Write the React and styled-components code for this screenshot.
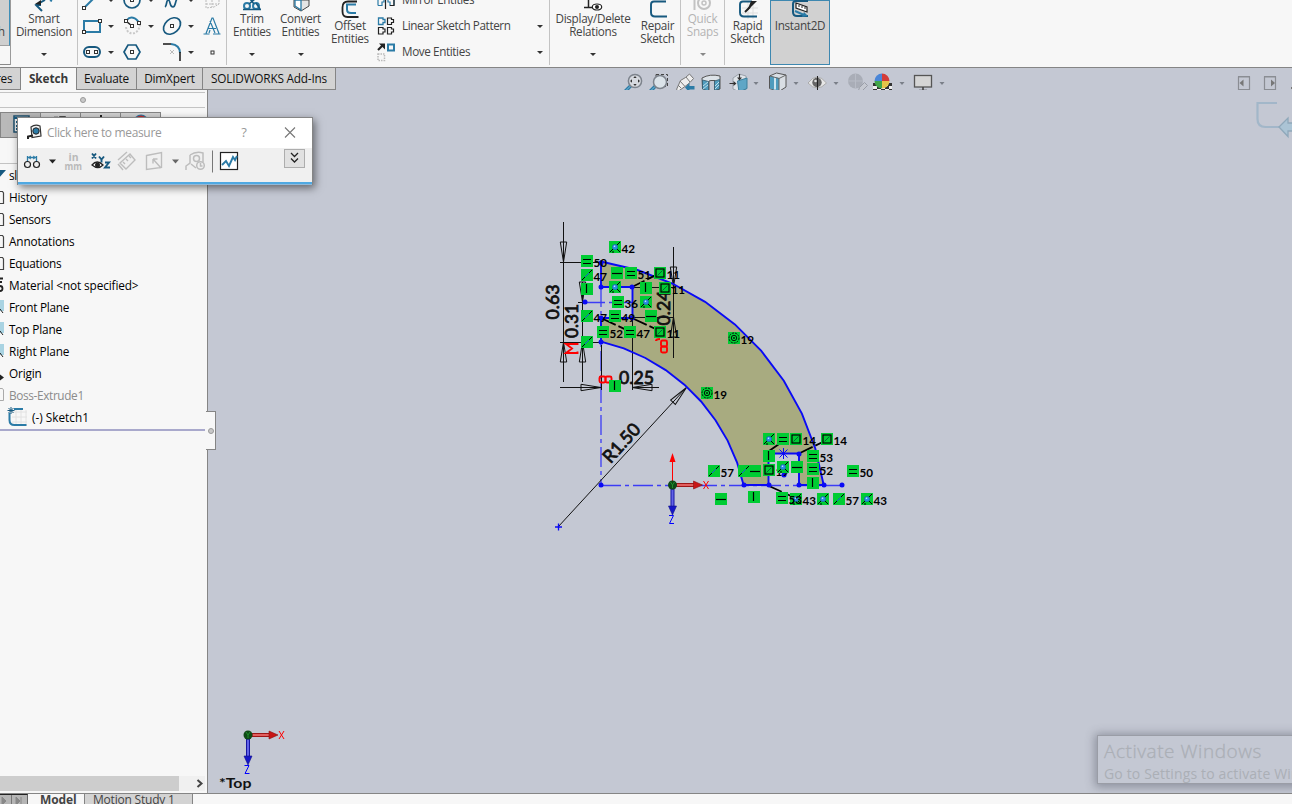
import React from "react";
import styled, { createGlobalStyle } from "styled-components";

const Global = createGlobalStyle`
  * { box-sizing: border-box; }
  body { margin: 0; overflow: hidden; font-family: "Open Sans", "Noto Sans", sans-serif; font-size: 12px; color: #000; }
  svg { display: block; flex: none; overflow: visible; }
`;

const NAVY = "#17597f";
const TEAL = "#2b7ba6";
const INK = "#333";

const Window = styled.div`
  width: 1292px; height: 804px; overflow: hidden; display: flex; flex-direction: column;
  background: #f7f7f7; position: relative;
`;

/* ---------- ribbon ---------- */
const Ribbon = styled.div`
  height: 68px; flex: none; display: flex; border-bottom: 1px solid #858585; background: #f7f7f7; overflow: hidden;
`;
const Group = styled.div`
  display: flex; height: 65px; width: ${p => p.$w}px; flex: none; border-right: 1px solid #c3c3c3;
`;
const CutButton = styled.div`
  width: 11px; height: 65px; display: flex; flex-direction: column; border-right: 1px solid #9a9a9a;
`;
const CutTop = styled.div`
  height: 46px; background: #cfcfcf; border-right: 1px solid #3f8fb8; border-bottom: 1px solid #a0a0a0;
  padding-top: 25px; line-height: 14px; padding-right: 4px; color: #444; direction: rtl; overflow: hidden;
`;
const CutBottom = styled.div`
  flex: 1; border-bottom: 1px solid #8a8a8a;
`;
const BigButton = styled.div`
  width: ${p => p.$w}px; margin-left: ${p => p.$ml || 0}px; height: 65px; flex: none; display: flex; flex-direction: column; align-items: center;
  color: ${p => (p.$off ? "#b4b4b4" : "#444")};
  ${p => p.$on && "background:#d1d1d1; box-shadow: inset 0 0 0 1px #3e88b0;"}
`;
const BigLabel = styled.div`
  text-align: center; line-height: 13px; white-space: pre; letter-spacing: -0.28px; font-size: 11.7px;
  flex: 1;
`;
const Caret = styled.i`
  width: 0; height: 0; border: 3px solid transparent; border-top-color: ${p => p.$c || "#333"}; border-bottom: 0; flex: none;
  margin-bottom: ${p => p.$mb || 0}px;
`;
const ToolGrid = styled.div`
  display: grid; grid-template-columns: 40px 40px 40px 26px; grid-auto-rows: 26px; margin-top: -13px; height: 78px; margin-left: 2px;
`;
const ToolCell = styled.div`
  display: flex; align-items: center; gap: 3px;
`;
const List = styled.div`
  display: flex; flex-direction: column; margin-top: -13px; width: 166px; margin-left: 2px;
`;
const ListRow = styled.div`
  height: 26px; display: flex; align-items: center; color: #444; font-size: 11.7px; letter-spacing: -0.38px;
`;
const ListText = styled.span`
  margin-left: 6px; flex: 1; white-space: nowrap; padding-bottom: 2px;
`;

/* ---------- tab strip and view tools ---------- */
const Header = styled.div`
  height: 22px; flex: none; display: flex; background: #c4c8d3;
`;
const Tab = styled.div`
  width: ${p => p.$w}px; height: 22px; flex: none; line-height: 21px; text-align: ${p => (p.$cut ? "left" : "center")}; white-space: nowrap; overflow: hidden;
  text-indent: ${p => (p.$cut ? -4 : 0)}px;
  background: ${p => (p.$on ? "#f7f7f7" : "#d3d3d3")}; color: ${p => (p.$on ? "#3a3a3a" : "#111")};
  font-weight: ${p => (p.$on ? 700 : 400)}; letter-spacing: ${p => p.$ls ?? -0.2}px; font-size: 11.8px;
  border-right: 1px solid #858585; border-bottom: ${p => (p.$on ? "0" : "1px solid #858585")};
`;
const ViewTools = styled.div`
  display: flex; margin-left: 284px; flex: 1;
`;
const PaneButtons = styled.div`
  display: flex; margin-left: auto; margin-right: 0;
`;

const Body = styled.div`
  height: 703px; flex: none; display: flex; background: #c4c8d3;
`;
const Panel = styled.div`
  width: 208px; flex: none; background: #f7f7f7; border-right: 1px solid #858585; display: flex; flex-direction: column; position: relative;
`;
const Splitter = styled.div`
  height: 16px; width: 205px; margin-top: 2px; border-top: 1px solid #c3c3c3; border-bottom: 1px solid #c3c3c3; flex: none;
  display: flex; align-items: center; justify-content: center; padding-right: 39px;
`;
const Dot = styled.i`
  width: 6px; height: 6px; border-radius: 50%; background: #c9c9c9; border: 1px solid #999; flex: none;
`;
const PanelTabs = styled.div`
  height: 26px; margin-top: 4px; display: flex; flex: none;
`;
const PanelTab = styled.div`
  width: ${p => (p.$on ? 41 : 40)}px; background: ${p => (p.$on ? "#b9b9b9" : "#d0d0d0")}; border: 1px solid #858585; border-left-width: ${p => (p.$on ? 1 : 0)}px;
  display: flex; justify-content: center; padding-top: 2px;
`;
const Tree = styled.div`
  margin-top: 25px; width: 205px; border-top: 1px solid #c3c3c3; border-bottom: 2px solid #a9a9cc; flex: none; height: 268px;
`;
const TreeRow = styled.div`
  height: 22px; display: flex; align-items: center; white-space: nowrap; color: ${p => (p.$off ? "#8b8b8b" : "#000")};
  letter-spacing: ${p => p.$ls ?? -0.27}px; font-size: 11.8px;
`;
const Flyout = styled.div`
  position: absolute; left: 206px; top: 321px; width: 10px; height: 39px; background: #f7f7f7; border: 1px solid #858585; border-left: 0;
  display: flex; align-items: center; justify-content: center;
`;
const Scroll = styled.div`
  margin-top: auto; margin-bottom: 2px; height: 15px; width: 205px; background: #f0f0f0; display: flex; align-items: center; flex: none;
`;
const Thumb = styled.div`
  width: 179px; height: 15px; background: #cdcdcd;
`;
const Canvas = styled.div`
  flex: 1; position: relative; overflow: hidden;
`;
const Toast = styled.div`
  position: absolute; left: 889px; top: 645px; width: 220px; height: 49px; border: 1px solid #9a9da6; padding: 2px 6px; color: #abafb6;
  box-shadow: 0 1px 9px 2px rgba(70, 75, 90, 0.45); background: #c4c8d3; white-space: nowrap;
`;
const ToastTitle = styled.div`
  font-size: 19px; line-height: 26px; letter-spacing: 0.55px; font-weight: 300; -webkit-text-stroke: 0.3px #abafb6;
`;
const ToastText = styled.div`
  font-size: 14px; line-height: 20px; letter-spacing: 0.15px;
`;

/* ---------- floating measure window ---------- */
const Dialog = styled.div`
  position: absolute; left: 17px; top: 117px; width: 296px; height: 68px; border: 1px solid #858585; border-bottom: 0; background: #f0f0f0;
  box-shadow: 2px 3px 8px rgba(0, 0, 0, 0.5); display: flex; flex-direction: column;
`;
const DialogTitle = styled.div`
  height: 30px; background: #fff; display: flex; align-items: center; color: #999; padding-left: 9px; padding-bottom: 2px;
`;
const DialogText = styled.span`
  margin-left: 5px; width: 187px; letter-spacing: -0.34px; white-space: nowrap;
`;
const Help = styled.span`
  width: 20px; text-align: center; font-size: 13px; margin-right: 28.5px;
`;
const DialogTools = styled.div`
  flex: 1; display: flex; align-items: flex-start;
`;
const DialogFoot = styled.div`
  height: 3px; background: #4fa9e2; border-bottom: 1px solid #92b9d8;
`;

/* ---------- bottom tabs ---------- */
const Bottom = styled.div`
  height: 11px; flex: none; display: flex; border-top: 1px solid #858585; background: #f7f7f7; overflow: hidden;
`;
const Nav = styled.div`
  width: 28px; height: 12px; background: #b5b5b5; border-top: 1px solid #222; border-right: 1px solid #666;
`;
const BottomTab = styled.div`
  width: ${p => p.$w}px; height: 16px; line-height: 12px; white-space: nowrap; color: #444; padding-left: ${p => p.$pl}px;
  font-weight: ${p => (p.$on ? 700 : 400)}; background: ${p => (p.$on ? "#f7f7f7" : "#d3d3d3")};
  border-right: 1px solid #858585; letter-spacing: ${p => (p.$on ? -0.1 : -0.2)}px;
`;

/* An icon is drawn in the window's own units; box is "x y width height". */
const Icon = ({ box, children }) => {
  const [, , w, h] = box.split(" ");
  return <svg width={w} height={h} viewBox={box} fill="none">{children}</svg>;
};
const Handle = ({ x, y }) => <rect x={x - 1.5} y={y - 1.5} width="3" height="3" fill="#fff" stroke={INK} strokeWidth="1" />;

const RibbonBar = () => (
  <Ribbon>
    <Group $w={78}>
      <CutButton><CutTop>h</CutTop><CutBottom /></CutButton>
      <BigButton $w={66}>
        <Icon box="11 0 66 12">
          <path d="M45 0 36 5 42 11M36 5l5 0" stroke={NAVY} strokeWidth="2" /><path d="M35 4l6-4v5z" fill="#222" /><path d="M50 0l2 1" stroke={TEAL} strokeWidth="2" />
        </Icon>
        <BigLabel>{"Smart\nDimension"}</BigLabel><Caret $mb={9} />
      </BigButton>
    </Group>
    <Group $w={149}>
      <ToolGrid>
        <ToolCell>
          <Icon box="80 -13 25 26"><path d="M84 8 96-4" stroke={TEAL} strokeWidth="2" /><Handle x={84} y={8} /></Icon><Caret />
        </ToolCell>
        <ToolCell>
          <Icon box="120 -13 25 26"><circle cx="132" cy="0" r="8" stroke={NAVY} strokeWidth="1.7" /><Handle x={132} y={0} /></Icon><Caret />
        </ToolCell>
        <ToolCell>
          <Icon box="160 -13 25 26"><path d="M165 7c2-1 1-6 3-7 3 0 1 7 5 7 3 0 2-8 5-9" stroke={NAVY} strokeWidth="1.7" /></Icon><Caret />
        </ToolCell>
        <ToolCell>
          <Icon box="200 -13 25 26"><path d="M206 0v8l8-1 5-3V0M206 4h13M212 0v7" stroke="#bbb" strokeDasharray="2 1" /></Icon>
        </ToolCell>
        <ToolCell>
          <Icon box="80 13 25 26"><rect x="84" y="21" width="16" height="11" stroke={TEAL} strokeWidth="2" /><Handle x={84} y={32} /><Handle x={100} y={21} /></Icon><Caret />
        </ToolCell>
        <ToolCell>
          <Icon box="120 13 25 26">
            <path d="M126 27c1 9 13 9 14-3" stroke="#c9c9c9" strokeWidth="2" strokeDasharray="2 1.5" /><path d="M127 20c3-4 9-3 12 3" stroke={TEAL} strokeWidth="2" />
            <path d="M126 21l6 5" stroke="#222" strokeWidth="1.5" /><Handle x={126} y={21} /><Handle x={132} y={26} /><Handle x={139} y={23} />
          </Icon><Caret />
        </ToolCell>
        <ToolCell>
          <Icon box="160 13 25 26"><ellipse cx="172" cy="26" rx="9.6" ry="7" transform="rotate(-42 172 26)" stroke={NAVY} strokeWidth="1.7" /><Handle x={172} y={26} /></Icon><Caret />
        </ToolCell>
        <ToolCell>
          <Icon box="200 13 25 26"><path d="M203.500 34h6M213 34h7.500M206 33.500l6-15.500h1l6 15.500M208 28.500h8M209 33l1-3M215 33l-5-12" stroke={TEAL} strokeWidth="1.2" /></Icon>
        </ToolCell>
        <ToolCell>
          <Icon box="80 39 25 26"><rect x="84" y="47" width="16" height="10" rx="5" stroke={NAVY} strokeWidth="2" /><Handle x={88} y={52} /><Handle x={96} y={52} /></Icon><Caret />
        </ToolCell>
        <ToolCell>
          <Icon box="120 39 25 26"><path d="M124 52l4-7h8l4 7-4 7h-8z" stroke={NAVY} strokeWidth="1.7" /><Handle x={132} y={52} /></Icon>
        </ToolCell>
        <ToolCell>
          <Icon box="160 39 25 26">
            <path d="M163 44h8" stroke="#222" strokeWidth="1.6" /><path d="M171 44q9 1 9 9" stroke={TEAL} strokeWidth="2" /><path d="M180 52v9" stroke="#222" strokeWidth="1.6" />
            <path d="M170 50l4 4m0-4-4 4" stroke="#bbb" />
          </Icon><Caret />
        </ToolCell>
        <ToolCell><Icon box="200 39 25 26"><Handle x={212.5} y={52.5} /></Icon></ToolCell>
      </ToolGrid>
    </Group>
    <Group $w={323}>
      <BigButton $w={48} $ml={1}>
        <Icon box="228 0 48 12">
          <circle cx="247" cy="6" r="3" stroke={TEAL} strokeWidth="2" /><circle cx="256" cy="6" r="3" stroke={TEAL} strokeWidth="2" />
          <path d="M249 4l6-5M254 4l-4-5M243 9.5h18M256 3l4 6" stroke={NAVY} strokeWidth="1.5" />
        </Icon>
        <BigLabel>{"Trim\nEntities"}</BigLabel><Caret $mb={9} />
      </BigButton>
      <BigButton $w={49}>
        <Icon box="276 0 48 12">
          <path d="M293 0h15v6l-8 5-7-4z" fill="#e4e4e4" stroke="#444" /><path d="M300 0v10l-6-4V0z" fill="#fff" stroke={TEAL} strokeWidth="1.3" />
        </Icon>
        <BigLabel>{"Convert\nEntities"}</BigLabel><Caret $mb={9} />
      </BigButton>
      <BigButton $w={50}>
        <Icon box="325 0 50 19">
          <path d="M357 1.500h-9q-5.500 0-5.500 6v4q0 5.500 5 5.500h11" stroke="#222" strokeWidth="1.8" /><path d="M356 4.500h-9v5q0 3.500 4 3.500h5" stroke={TEAL} strokeWidth="2" />
        </Icon>
        <BigLabel>{"Offset\nEntities"}</BigLabel>
      </BigButton>
      <List>
        <ListRow>
          <Icon box="377 -13 19 26"><path d="M378 5.500V0M378 5.500h4V2h2V0M394 5.500V0M394 5.500h-4V2h-2V0" stroke={TEAL} strokeWidth="1.2" /><path d="M385.500 0v9M390 5.500h4V0" stroke="#222" strokeWidth="1.2" /></Icon>
          <ListText>Mirror Entities</ListText>
        </ListRow>
        <ListRow>
          <Icon box="377 13 19 26">
            <path d="M378.500 18v6.500h4.500v-2h2v-3h-2V18z" stroke={TEAL} strokeWidth="1.3" />
            <path d="M387.500 18v6.500h4v-2h2v-3h-2V18zM378.500 27.500V34h4.500v-2h2v-3h-2v-1.500zM387.500 27.500V34h4v-2h2v-3h-2v-1.500z" stroke="#222" strokeWidth="1.2" />
          </Icon>
          <ListText>Linear Sketch Pattern</ListText><Caret />
        </ListRow>
        <ListRow>
          <Icon box="377 39 19 26">
            <path d="M378 50l5-5" stroke="#222" strokeWidth="2.2" /><path d="M379 43.500h6v6z" fill="#222" /><rect x="388" y="44.500" width="6" height="6" stroke={TEAL} strokeWidth="2" />
            <rect x="378" y="54" width="6.500" height="6.500" stroke="#bbb" strokeWidth="1.500" strokeDasharray="1.500 1" />
          </Icon>
          <ListText>Move Entities</ListText><Caret />
        </ListRow>
      </List>
    </Group>
    <Group $w={131}>
      <BigButton $w={84} $ml={1}>
        <Icon box="551 0 84 12"><path d="M588.500 0v7M584 7.500h9" stroke="#222" strokeWidth="1.500" /><ellipse cx="597" cy="7" rx="4.700" ry="3" fill="#fff" stroke="#222" strokeWidth="1.200" /><circle cx="597" cy="7" r="2" fill="#222" /></Icon>
        <BigLabel>{"Display/Delete\nRelations"}</BigLabel><Caret $mb={9} />
      </BigButton>
      <BigButton $w={45}>
        <Icon box="634 0 46 19"><path d="M665 1.500h-12q-3 0-3 3v8q0 4 4 4h12" stroke={NAVY} strokeWidth="1.900" /></Icon>
        <BigLabel>{"Repair\nSketch"}</BigLabel>
      </BigButton>
    </Group>
    <Group $w={44}>
      <BigButton $w={43} $off>
        <Icon box="681 0 43 12"><path d="M694.500 0v10" stroke="#c2c2c2" strokeWidth="2" /><circle cx="704" cy="3" r="6" stroke="#c2c2c2" strokeWidth="2" /><circle cx="704" cy="3" r="2" stroke="#c2c2c2" strokeWidth="1.500" /></Icon>
        <BigLabel>{"Quick\nSnaps"}</BigLabel><Caret $c="#888" $mb={9} />
      </BigButton>
    </Group>
    <BigButton $w={45}>
      <Icon box="725 0 45 19">
        <path d="M742 8h16M742 13h16M748 2v17M753 5v14" stroke="#ddd" /><path d="M752 1.500h-9q-3 0-3 3v8q0 4 4 4h13" stroke={NAVY} strokeWidth="1.900" /><path d="M747 11l4-10h6z" fill="#222" /><path d="M745 12l5-5" stroke="#222" strokeWidth="2" />
      </Icon>
      <BigLabel>{"Rapid\nSketch"}</BigLabel>
    </BigButton>
    <BigButton $w={60} $on>
      <Icon box="770 0 60 19">
        <path d="M808 1h-12q-3 0-3 3v8q0 4 4 4h11" stroke={NAVY} strokeWidth="2" /><path d="M796 3l11 4v5l-11-4z" fill="#fff" stroke="#222" strokeWidth="1.200" /><path d="M799 5v2M802 6v2M805 7v2" stroke="#222" />
        <path d="M795 11l9 4" stroke={TEAL} strokeWidth="2" /><path d="M808 16l-6 1 2-5z" fill={TEAL} />
      </Icon>
      <BigLabel>Instant2D</BigLabel>
    </BigButton>
  </Ribbon>
);

const HudCaret = () => <Icon box="0 0 13 22"><path d="M3.500 14h5l-2.500 3z" fill="#7a7f88" /></Icon>;

const HeaderBar = () => (
  <Header>
    <Tab $w={21} $cut>res</Tab>
    <Tab $w={56} $on $ls={-0.1}>Sketch</Tab>
    <Tab $w={60}>Evaluate</Tab>
    <Tab $w={66}>DimXpert</Tab>
    <Tab $w={133}>SOLIDWORKS Add-Ins</Tab>
    <ViewTools>
      <Icon box="620 68 26 22">
        <path d="M625.500 91 630.500 86" stroke={TEAL} strokeWidth="3.500" strokeLinecap="round" /><path d="M625.500 91 630.500 86" stroke="#7fc0dc" strokeLinecap="round" />
        <circle cx="635" cy="81" r="6.600" fill="#d6d9df" stroke="#7d838c" strokeWidth="1.500" />
        <path d="M635 76l1.700 2h-3.400zM635 86l1.700-2h-3.400zM630 81l2-1.700v3.400zM640 81l-2-1.700v3.400z" fill="#333" />
      </Icon>
      <Icon box="646 68 26 22">
        <rect x="656" y="74.500" width="11.500" height="12" stroke="#444" strokeDasharray="3 2" /><path d="M650.500 91 655.500 86" stroke={TEAL} strokeWidth="3.500" strokeLinecap="round" />
        <path d="M650.500 91 655.500 86" stroke="#7fc0dc" strokeLinecap="round" /><circle cx="660" cy="82" r="6.500" fill="#dbe3e9" stroke="#7d838c" strokeWidth="1.500" />
      </Icon>
      <Icon box="672 68 28 22">
        <path d="M676.500 89.500l4-9 5-3 4-3.500 4 4.500-3.500 4-5 4-6.500 4.500z" fill="#eee" stroke="#777" /><path d="M680 81l5 5.500M686 77l4 5M678 85l3 3" stroke="#777" />
        <path d="M685 87.500l4.500-4.500v3h5v3.500h-5v3z" fill={TEAL} />
      </Icon>
      <Icon box="700 68 26 22">
        <path d="M702 78q8-4.500 18-2v13l-5 1.500v-10h-4l-2 .5v9.500l-6.500-2z" fill="#dde3e8" stroke="#555" /><path d="M702.500 80l6 1.500v9.500l-6-2zM714.500 81l5-1.500v9.500l-5 1.500z" fill="#4f9bbd" stroke="#34586b" strokeWidth=".8" />
        <path d="M703 86l5-4M703 89l5-4M715 86l4-4M715 89l4-4" stroke="#d8edf5" strokeWidth=".8" />
      </Icon>
      <Icon box="726 68 24 22">
        <path d="M733 78l6-4 7 2v13l-6 3-7-3z" fill="#dfe4e9" stroke="#8c939c" strokeWidth=".8" /><path d="M737.500 81l9.500-3v10.500l-8 3.500z" fill="#5fa6c6" stroke="#3c7e9b" />
        <path d="M739.500 74v5M729.500 83.500h5" stroke="#333" strokeWidth="1.200" /><path d="M737 77.500h5l-2.500 3zM733.500 81v5l3-2.500z" fill="#333" />
      </Icon>
      <HudCaret />
      <Icon box="763 68 27 22">
        <path d="M769.500 76l7-3 9.500 2v12l-7 4.500-9.500-3z" fill="#d9dee4" stroke="#555" /><path d="M770 76l9 2v13l-9-2.500z" fill="#4f9bbd" /><path d="M775 76.500v13" stroke="#cfe4ee" strokeWidth="2" /><path d="M779 78.500l7-3.500M779 78.500v12.500M770 76l9 2.500" stroke="#666" />
      </Icon>
      <HudCaret />
      <Icon box="803 68 27 22">
        <path d="M808 83q9-12 18.500 0-9.500 10-18.500 0z" fill="#e7e7e7" stroke="#aaa" /><circle cx="817" cy="82.500" r="4.700" fill="#666" /><path d="M817.500 76v14.500" stroke="#222" /><circle cx="815.500" cy="81" r="1.300" fill="#ddd" />
      </Icon>
      <HudCaret />
      <Icon box="843 68 29 22">
        <circle cx="855.500" cy="81" r="7.500" fill="#a9adb7" /><path d="M848 81h15M855.500 73.500v15" stroke="#b8bcc6" /><path d="M858 92l1.500-4.500 5-5 3 3-5 5z" fill="#c6c9d1" stroke="#9a9ea8" />
      </Icon>
      <Icon box="872 68 24 22">
        <path d="M873 83h19v10h-19z" fill="#eee" /><path d="M873 83h4v3h-4zM873 89h4v4h-4zM881 89h4v4h-4zM888 83h4v3h-4zM877 86h4v3h-4zM885 86h4v3h-4zM889 89h3v4h-3z" fill="#333" />
        <path d="M882 81v-7.500a7.500 7.500 0 0 0-7.500 7.500z" fill="#4a86d8" /><path d="M882 81v-7.500a7.500 7.500 0 0 1 7.500 7.500z" fill="#d43c38" /><path d="M882 81h-7.500a7.500 7.500 0 0 0 7.500 7.500z" fill="#42a64a" /><path d="M882 81h7.500a7.500 7.500 0 0 1-7.500 7.500z" fill="#e6c548" />
      </Icon>
      <HudCaret />
      <Icon box="909 68 27 22">
        <rect x="914.500" y="75.500" width="17" height="11.500" fill="#d5d5d5" stroke="#555" strokeWidth="1.300" /><path d="M923 87v3M919 90.500h8" stroke="#444" strokeWidth="1.600" />
      </Icon>
      <HudCaret />
      <PaneButtons>
        <Icon box="1237 68 26 22"><path d="M1238.500 77h11v12.500h-11zM1238 76.500h12" stroke="#8a8d93" strokeWidth="1.200" /><path d="M1243.500 79.500v7l-4-3.500z" fill="#777" /></Icon>
        <Icon box="1263 68 29 22"><path d="M1264.500 77h11v12.500h-11zM1264 76.500h12" stroke="#8a8d93" strokeWidth="1.200" /><path d="M1271 79.500v7l4-3.500z" fill="#777" /><path d="M1291 88h2" stroke="#777" strokeWidth="2" /></Icon>
      </PaneButtons>
    </ViewTools>
  </Header>
);

const folder = <path d="M-4 5.500h6.500l1 1.500v10.500H-4" stroke="#444" strokeWidth="1.200" />;
const plane = <g><path d="M0 4h4v11h-4z" fill="#a9d3e2" /><path d="M0 13l3 4" stroke="#222" /></g>;
const treeRows = [
  { t: "sl", icon: <path d="M-2 6h8l-7 8z" fill={NAVY} /> },
  { t: "History", icon: folder, ls: -0.2 },
  { t: "Sensors", icon: folder },
  { t: "Annotations", icon: folder, ls: -0.12 },
  { t: "Equations", icon: folder },
  { t: "Material <not specified>", icon: <g stroke="#222" strokeWidth="1.800"><path d="M0 4.500h3M0 8h2" /><circle cx="0" cy="14.500" r="2.500" /></g>, ls: -0.12 },
  { t: "Front Plane", icon: plane },
  { t: "Top Plane", icon: plane, ls: -0.15 },
  { t: "Right Plane", icon: plane, ls: -0.12 },
  { t: "Origin", icon: <path d="M0 12.500l4 3-4 3z" fill="#222" />, ls: -0.15 },
  { t: "Boss-Extrude1", off: true, ls: -0.35, icon: <path d="M-4 4.500h6.500l1 1.500v10.500H-4" stroke="#aaa" /> },
];

const FeaturePanel = () => (
  <Panel>
    <Splitter><Dot /></Splitter>
    <PanelTabs>
      <PanelTab $on><Icon box="11 115 18 20"><rect x="13" y="116" width="15" height="16" fill="#eee" stroke="#1d4e6b" strokeWidth="1.500" /><path d="M13 118h15M15 122h3M20 122h7M15 126h3M20 126h7M15 129h3M20 129h7" stroke={NAVY} strokeWidth="2" /></Icon></PanelTab>
      <PanelTab><Icon box="52 115 18 20"><path d="M54 117.500h4M60 122v-5h5v5" stroke="#222" strokeWidth="1.500" /></Icon></PanelTab>
      <PanelTab><Icon box="92 115 18 20"><path d="M101 115v6" stroke="#222" strokeWidth="2" /></Icon></PanelTab>
      <PanelTab><Icon box="132 115 18 20"><circle cx="141" cy="122" r="7.500" fill={TEAL} /><path d="M135 118q6-5 12 0l-6 4z" fill="#c62f2f" /></Icon></PanelTab>
    </PanelTabs>
    <Tree>
      {treeRows.map(r => (
        <TreeRow key={r.t} $off={r.off} $ls={r.ls}><Icon box="0 0 9 22">{r.icon}</Icon>{r.t}</TreeRow>
      ))}
      <TreeRow $ls={0}>
        <Icon box="0 406 32 22">
          <path d="M12 412h15M12 417h15M12 422h15M16 410v16M21 410v16M26 410v16" stroke="#e2e2e2" /><path d="M14 409h9M9.500 413v7q0 5 5 5h12" stroke={TEAL} strokeWidth="2" />
          <path d="M11 407v7M7.500 410.500h7M8.500 408l5 5M13.500 408l-5 5" stroke={NAVY} />
        </Icon>
        (-) Sketch1
      </TreeRow>
    </Tree>
    <Flyout><Dot /></Flyout>
    <Scroll><Thumb /><Icon box="179 776 26 15"><path d="M197.500 780l4 3.500-4 3.500" stroke="#444" strokeWidth="2" /></Icon></Scroll>
  </Panel>
);

/* ---------- sketch drawing ---------- */
/* Both edges of the bent strip share one centre, (558, 527), and are drawn as chords. */
const arc = (r, from, to) => Array.from({ length: 10 }, (_, i) => {
  const a = ((from + ((to - from) * i) / 9) * Math.PI) / 180;
  return `${(558 + r * Math.cos(a)).toFixed(1)},${(527 - r * Math.sin(a)).toFixed(1)}`;
}).join(" ");
const profile = `601,287 632.5,287 632.5,318 601,318 601,342 ${arc(190.3, 76.9, 12.75)} 768.5,485 768.5,453.500 799,453.500 799,485 824,485 ${arc(269, 8.98, 80.8)}`;

const relations = [
  ["coin", 615, 247, "42"], ["eq", 587, 261, "50"], ["line", 587, 275, "47"], ["v", 587, 289], ["h", 617, 273], ["eq", 631, 273, "51"],
  ["sq", 660, 273, "11"], ["coin", 615, 287], ["v", 646, 288], ["sq", 665, 288, "11"], ["eq", 618, 302, "36"], ["coin", 646, 302],
  ["line", 587, 316, "47"], ["eq", 615, 316, "49"], ["h", 651, 316], ["eq", 603, 332, "52"], ["eq", 630, 332, "47"], ["sq", 660, 332, "11"],
  ["line", 587, 342], ["v", 615, 386], ["conc", 734, 338, "19"], ["conc", 707, 393, "19"], ["coin", 769, 439], ["eq", 783, 439],
  ["sq", 796, 439, "14"], ["sq", 827, 439, "14"], ["v", 769, 456], ["eq", 813, 456, "53"], ["line", 714, 471, "57"], ["line", 744, 471],
  ["h", 755, 471], ["sq", 769, 470, "19"], ["coin", 783, 467], ["h", 797, 467], ["eq", 813, 469, "52"], ["eq", 853, 471, "50"], ["v", 813, 483],
  ["h", 721, 499], ["v", 754, 497], ["coin", 796, 499, "43"], ["eq", 782, 498, "53"], ["coin", 823, 499], ["line", 839, 499, "57"], ["coin", 867, 499, "43"],
];

const Relation = ({ kind, x, y, label }) => (
  <g transform={`translate(${x} ${y})`}>
    <rect x="-6" y="-6" width="12" height="12" fill="#00cc33" shapeRendering="crispEdges" />
    {kind === "eq" && <path d="M-4-1.500h8M-4 2.500h8" stroke="#000" />}
    {kind === "h" && <path d="M-5 .5h10" stroke="#000" strokeWidth="1.200" />}
    {kind === "v" && <path d="M-.5-5v9" stroke="#000" strokeWidth="1.200" />}
    {kind === "line" && <path d="M-5 5-1.500 1.500M1.500-1.500 5-5" stroke="#000" />}
    {kind === "line" && <path d="M-2 2 2-2" stroke="#1a55d8" />}
    {kind === "coin" && <g><path d="M-5 5 5-5M2 2l3 3M-3 5h2" stroke="#000" /><circle cx="0" cy="0" r="2.600" fill="#2e8be6" stroke="#1660b0" strokeWidth=".6" /><circle cx="-.5" cy="-.7" r=".8" fill="#cfeaff" /></g>}
    {kind === "sq" && <g><rect x="-4" y="-4" width="8" height="8" stroke="#000" strokeWidth="1.200" /><path d="M-2.500 2.500 2.500-2.500" stroke="#063" /></g>}
    {kind === "conc" && <g stroke="#000" strokeWidth=".9"><circle r="5" strokeDasharray="2 1" /><circle r="2.700" /><circle r=".6" /></g>}
    {label && <text x="6.500" y="5.500" fontSize="11.300" fontWeight="700" fill="#000" textLength="13.500" lengthAdjust="spacingAndGlyphs">{label}</text>}
  </g>
);

const Arrow = ({ x, y, a }) => (
  <path d="M0 0-20 3.200V-3.200z" stroke="#111" strokeWidth="1" transform={`translate(${x} ${y}) rotate(${a})`} />
);
const Dim = ({ x, y, a = 0, w = 35, children }) => (
  <text transform={`translate(${x} ${y}) rotate(${a})`} textAnchor="middle" y="6.300" fontSize="18" fill="#111" stroke="#111" strokeWidth=".8" textLength={w} lengthAdjust="spacingAndGlyphs">{children}</text>
);
const Axes = ({ x, y, up }) => (
  <g transform={`translate(${x} ${y})`}>
    {up && <g><path d="M0 0v-26" stroke="#f00" /><path d="M0-32l3 9h-6z" fill="#f00" /></g>}
    <rect x="4" y="-1.500" width="18" height="3" fill="#e25e5e" stroke="#9c1616" /><path d="M21-4l9 4-9 4z" fill="#c81616" stroke="#8a1010" strokeWidth=".6" />
    <rect x="-1.500" y="4" width="3" height="18" fill="#6262e8" stroke="#1616a0" /><path d="M-4 21l4 9 4-9z" fill="#1616c8" stroke="#10108a" strokeWidth=".6" />
    <circle r="4.500" fill="#0f4a16" /><path d="M-2-3l2 3 2-3M0 0v3" stroke="#1f8f2a" />
    <path d="M31-4l5 8M36-4l-5 8" stroke="#f00" /><path d="M-3.500 30.500h4.500l-4 8h4.500" stroke="#00f" />
  </g>
);
const Chain = ({ x, y, a = 0 }) => (
  <g transform={`translate(${x} ${y}) rotate(${a})`} stroke="#f00" strokeWidth="1.900">
    <rect x="-5.500" y="-2.500" width="6" height="6" rx="1.500" /><rect x=".5" y="-2.500" width="6" height="6" rx="1.500" />
  </g>
);
const points = [
  [601, 263], [601, 287], [632, 287], [601, 318], [632, 318], [601, 342], [585, 302], [601, 485],
  [744, 485], [769, 485], [799, 485], [824, 485], [842, 485], [799, 454], [784, 475],
];

const Sketch = () => (
  <svg width="1084" height="703" viewBox="208 90 1084 703" fill="none" fontFamily="Lato, sans-serif">
    <polygon points={profile} fill="#a8ab80" />
    <g stroke="#3c3cf5" strokeWidth="1.300">
      <path d="M601 287V485" strokeDasharray="20 4 4 4" /><path d="M601 485.500H842" strokeDasharray="20 4 4 4" /><path d="M585 302.500h48" strokeDasharray="20 4 6 4" />
    </g>
    <g stroke="#111" strokeWidth="1">
      <path d="M563.500 222v160M560 262.500h41M560 342.500h41M582.500 282v100M578 302.500h5M673.500 247v111M633 287.500h41M633 317.500h41" />
      <path d="M601.500 345v45M632.500 318v72M560 387.500h42M632 387.500h27M558 527L686 388" />
    </g>
    <Arrow x={563.5} y={262} a={90} /><Arrow x={563.5} y={342} a={-90} /><Arrow x={582.5} y={302} a={90} /><Arrow x={582.5} y={342} a={-90} />
    <Arrow x={673.5} y={287} a={90} /><Arrow x={673.5} y={317} a={-90} /><Arrow x={601} y={387.5} a={0} /><Arrow x={632} y={387.5} a={180} /><Arrow x={686.5} y={387.5} a={-47.5} />
    <polygon points={profile} stroke="#0a0af5" strokeWidth="1.900" />
    <path d="M632 287 660 273M603 319l30 14M634 319l26 12M769 451l13-9M800 453l27-13M769 486l22 10" stroke="#000" strokeWidth="1.800" strokeDasharray="14 3" />
    <g fill="#0a0af5">
      {points.map(([x, y]) => <circle key={`${x}-${y}`} cx={x} cy={y} r="2.500" />)}
    </g>
    <Dim x={553} y={302} a={-90}>0.63</Dim><Dim x={572} y={321} a={-90} w={34}>0.31</Dim><Dim x={664} y={308} a={-90}>0.24</Dim><Dim x={636.5} y={378}>0.25</Dim>
    <Dim x={621.5} y={443} a={-47.5} w={46}>R1.50</Dim>
    <path d="M577.500 345v-1h-11.500l6 4.500-6 4.500h11.500v-1.500" stroke="#f00" strokeWidth="1.900" />
    <Chain x={605} y={379} /><Chain x={664.5} y={346} a={90} /><path d="M656 341q0-2 4-2" stroke="#f00" strokeWidth="2" />
    {relations.map(([kind, x, y, label]) => <Relation key={`${x}-${y}`} kind={kind} x={x} y={y} label={label} />)}
    <path d="M783.500 448v11M778 453.500h11M779.500 449.500l8 8M787.500 449.500l-8 8" stroke="#0a0af5" />
    <path d="M555 527h7M558.500 523.500v7" stroke="#0a0af5" strokeWidth="1.300" />
    <Axes x={672.5} y={485} up />
    <Axes x={248} y={735} />
    <text x="219" y="788" fontSize="13.500" fontWeight="700" fill="#111" textLength="32.500" lengthAdjust="spacingAndGlyphs">*Top</text>
    <g opacity=".9">
      <path d="M1277 103h-19.500v16q0 8 8 8h14" stroke="#9fb5c8" strokeWidth="2.200" /><path d="M1279 127l9-9v5h6v8h-6v5.500z" fill="#a9c4d6" stroke="#8aa5b8" strokeWidth="1.300" />
    </g>
  </svg>
);

const MeasureDialog = () => (
  <Dialog>
    <DialogTitle>
      <Icon box="27 123 15 18">
        <path d="M31 127q4-3 9-1l1 10-9 1.500z" fill="#f4f4f4" stroke="#333" strokeWidth="1.200" /><circle cx="36" cy="131" r="3.200" fill={TEAL} stroke="#222" /><path d="M33 135.500l-5 1v2.500" stroke="#222" strokeWidth="2" />
      </Icon>
      <DialogText>Click here to measure</DialogText><Help>?</Help>
      <Icon box="282 125 13 13"><path d="M284 126.500l10 10M294 126.500l-10 10" stroke="#777" strokeWidth="1.100" /></Icon>
    </DialogTitle>
    <DialogTools>
      <Icon box="18 148 294 33">
        <path d="M27.500 156v6M36.500 156v6M28 157.500h8" stroke={TEAL} strokeWidth="1.300" /><path d="M31 156l-2.500 1.500 2.500 1.500M33 156l2.500 1.500-2.500 1.500" stroke={TEAL} />
        <circle cx="27.500" cy="164.500" r="3" stroke="#222" strokeWidth="1.200" /><circle cx="36.500" cy="164.500" r="3" stroke="#222" strokeWidth="1.200" /><path d="M49 159.500h7l-3.500 4z" fill="#222" />
        <g fill="#b9b9b9" fontWeight="700" fontSize="10.500"><text x="68.500" y="160.500" textLength="10" lengthAdjust="spacingAndGlyphs">in</text><text x="64.500" y="170" textLength="17.500" lengthAdjust="spacingAndGlyphs">mm</text></g>
        <path d="M92 153.500l4 5M96 153.500l-4 5M99 156.500l2.500 3 2.500-3M101.500 159v3.500M105 162.500h4l-4 5h5" stroke={NAVY} strokeWidth="1.900" />
        <path d="M92 165q5-6 11 0-5 5-11 0z" fill="#fff" stroke="#222" strokeWidth="1.300" /><circle cx="97.500" cy="165" r="2.500" fill="#222" />
        <g stroke="#bdbdbd" strokeWidth="1.400"><path d="M120 163l10-9 5 6-9 9zM118 160l9-8M123 162l2 2M126 159l2 2M129 156l2 2M118 164l5 6" /><path d="M146.500 155.500l15-3v15l-15 2zM153 159l8 9M153 159h4.500M153 159v4.500" /></g>
        <path d="M172 159.500h7l-3.500 4z" fill="#666" />
        <g stroke="#bdbdbd" strokeWidth="1.500"><path d="M190 155q6-4 13-2v9M190 155v8l-4 3v4M191 164l5 4" /><circle cx="196.500" cy="158.500" r="3" /><circle cx="200.500" cy="165.500" r="3.800" /><path d="M200.500 163v3h2" /></g>
        <path d="M212.500 150.500v22" stroke="#777" />
        <rect x="220.500" y="152.500" width="17" height="17" fill="#fff" stroke="#222" strokeWidth="1.200" /><path d="M222 165l4-4 3 5 4-9 2 3 2-4" stroke={TEAL} strokeWidth="1.900" />
        <rect x="284.500" y="149.500" width="20" height="18" fill="#e1e1e1" stroke="#adadad" /><path d="M291 153l3.500 3.500 3.500-3.500M291 158.500l3.500 3.500 3.500-3.500" stroke="#222" strokeWidth="1.300" />
      </Icon>
    </DialogTools>
    <DialogFoot />
  </Dialog>
);

export default function App() {
  return (
    <Window>
      <Global />
      <RibbonBar />
      <HeaderBar />
      <Body>
        <FeaturePanel />
        <Canvas>
          <Sketch />
          <Toast><ToastTitle>Activate Windows</ToastTitle><ToastText>Go to Settings to activate Windows.</ToastText></Toast>
        </Canvas>
      </Body>
      <Bottom>
        <Nav><Icon box="0 795 28 9"><path d="M2 797v8l4-4zM16 797v8l4-4zM21 797v8" fill="#888" stroke="#888" /><path d="M11.500 795v10" stroke="#777" /></Icon></Nav>
        <BottomTab $w={57} $on $pl={12}>Model</BottomTab>
        <BottomTab $w={108} $pl={8}>Motion Study 1</BottomTab>
      </Bottom>
      <MeasureDialog />
    </Window>
  );
}
